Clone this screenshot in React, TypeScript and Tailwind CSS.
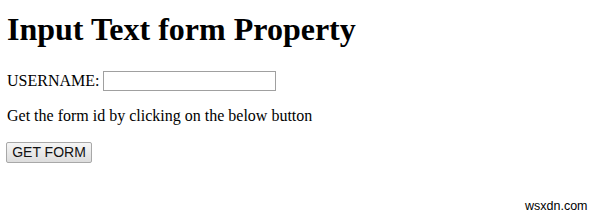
export default function App() {
  return (
    <div className="relative w-[599px] h-[216px] bg-white overflow-hidden text-black">
      <div className="pl-[7px] pt-[11px] font-['Liberation_Serif',serif]">
        <h1 className="text-[32px] leading-[37px] font-bold">Input Text form Property</h1>
        <div className="mt-[23px] flex items-center text-[16px] leading-[18px] h-[20px]">
          <span>USERNAME:</span>
          <span className="ml-[4px] w-[173px] h-[20px] border border-[#a0a0a0] bg-white" />
        </div>
        <p className="mt-[16px] text-[16px] leading-[18px]">Get the form id by clicking on the below button</p>
        <div className="mt-[17px] -ml-px flex">
          <button className="w-[86px] h-[21px] border border-[#a8a8a8] rounded-[2px] bg-gradient-to-b from-[#f6f6f6] to-[#dddddd] font-['Liberation_Sans',sans-serif] text-[14px] leading-[19px] text-[#111]">
            GET FORM
          </button>
        </div>
      </div>
      <div className="absolute left-[525px] top-[199px] font-['Liberation_Sans',sans-serif] text-[12.5px] leading-[14px] text-black">
        wsxdn.com
      </div>
    </div>
  );
}
